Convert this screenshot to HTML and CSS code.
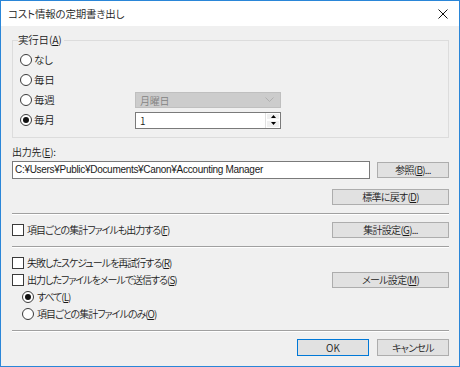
FILE: index.html
```html
<!DOCTYPE html>
<html lang="ja">
<head>
<meta charset="utf-8">
<link rel="stylesheet" href="styles.css">
</head>
<body>
<div class="window">
  <div class="titlebar">
    <span class="title">コスト情報の定期書き出し</span>
    <svg class="close" width="10" height="10" viewBox="0 0 10 10"><path d="M0.5 0.5L9.5 9.5M9.5 0.5L0.5 9.5" stroke="#111" stroke-width="1"/></svg>
  </div>
  <div class="content">
    <fieldset class="group">
      <legend>実行日(<u>A</u>)</legend>
      <div class="sched">
        <div class="opt"><span class="radio"></span>なし</div>
        <div></div>
        <div class="opt"><span class="radio"></span>毎日</div>
        <div></div>
        <div class="opt"><span class="radio"></span>毎週</div>
        <div class="combo"><span>月曜日</span><svg width="9" height="6" viewBox="0 0 9 6"><path d="M0.5 0.5L4.5 4.5L8.5 0.5" fill="none" stroke="#b0b0b0"/></svg></div>
        <div class="opt"><span class="radio on"></span>毎月</div>
        <div class="spin">
          <span class="spin-val">1</span>
          <div class="spin-btns">
            <div class="sb"><svg width="5" height="3" viewBox="0 0 5 3"><path d="M0 3L2.5 0L5 3Z" fill="#000"/></svg></div>
            <div class="sb"><svg width="5" height="3" viewBox="0 0 5 3"><path d="M0 0L2.5 3L5 0Z" fill="#000"/></svg></div>
          </div>
        </div>
      </div>
    </fieldset>

    <div class="label">出力先(<u>E</u>):</div>
    <div class="path-row">
      <div class="textbox">C:¥Users¥Public¥Documents¥Canon¥Accounting Manager</div>
      <button class="btn small">参照(<u>B</u>)...</button>
    </div>
    <div class="right-row reset">
      <button class="btn wide">標準に戻す(<u>D</u>)</button>
    </div>

    <div class="sep"></div>

    <div class="split-row summary">
      <div class="opt long"><span class="check"></span>項目ごとの集計ファイルも出力する(<u>F</u>)</div>
      <button class="btn wide">集計設定(<u>G</u>)...</button>
    </div>

    <div class="sep"></div>

    <div class="mail">
      <div class="line"><div class="opt long"><span class="check"></span>失敗したスケジュールを再試行する(<u>R</u>)</div></div>
      <div class="line split-row">
        <div class="opt long"><span class="check"></span>出力したファイルをメールで送信する(<u>S</u>)</div>
        <button class="btn wide">メール設定(<u>M</u>)</button>
      </div>
      <div class="line sub"><div class="opt long"><span class="radio on"></span>すべて(<u>L</u>)</div></div>
      <div class="line sub"><div class="opt long"><span class="radio"></span>項目ごとの集計ファイルのみ(<u>O</u>)</div></div>
    </div>

    <div class="sep last"></div>

    <div class="footer">
      <button class="btn small default">OK</button>
      <button class="btn small">キャンセル</button>
    </div>
  </div>
</div>
</body>
</html>
```

FILE: styles.css
```css
* { box-sizing: border-box; }
html, body { margin: 0; padding: 0; background: #f0f0f0; }
body {
  font-family: "Noto Sans CJK JP", "Noto Sans", sans-serif;
  font-size: 10px;
  font-weight: 350;
  letter-spacing: -0.2px;
  font-feature-settings: "palt";
  color: #1a1a1a;
}
u { text-decoration: underline; text-underline-offset: 1px; }

.window {
  width: 460px;
  height: 367px;
  border: 1px solid #2a86d8;
  background: #f0f0f0;
  display: flex;
  flex-direction: column;
}
.titlebar {
  height: 25px;
  background: #fff;
  display: flex;
  align-items: center;
  justify-content: space-between;
  padding: 0 11px 0 7px;
  flex: none;
}
.title { font-size: 10.5px; line-height: 16px; }
.close { display: block; }

.content {
  flex: 1;
  padding: 6px 10px 0 11px;
  display: flex;
  flex-direction: column;
}

.group {
  margin: 0;
  padding: 2px 0 7px 5px;
  border: 1px solid #dcdcdc;
  min-width: 0;
}
.group legend {
  padding: 0 2px 0 0;
  line-height: 16px;
  font-size: 10.5px;
}
.sched {
  display: grid;
  grid-template-columns: 117px 146px;
  grid-auto-rows: 20px;
  align-items: center;
}

.opt {
  display: flex;
  align-items: center;
  line-height: 16px;
  white-space: nowrap;
}
.sched .opt { margin-left: 2px; font-size: 10.5px; }
.opt.long { letter-spacing: -1px; }
.opt.long .radio, .opt.long .check { margin-right: 3px; }

.radio {
  width: 12px;
  height: 12px;
  border: 1px solid #3a3a3a;
  border-radius: 50%;
  background: #fff;
  margin-right: 2px;
  display: flex;
  align-items: center;
  justify-content: center;
  flex: none;
}
.radio.on::after {
  content: "";
  width: 6px;
  height: 6px;
  border-radius: 50%;
  background: #111;
}
.check {
  width: 12px;
  height: 12px;
  border: 1px solid #3a3a3a;
  background: #fff;
  margin-right: 2px;
  flex: none;
}

.combo {
  height: 16px;
  background: #cccccc;
  border: 1px solid #bfbfbf;
  color: #838383;
  display: flex;
  align-items: center;
  justify-content: space-between;
  padding: 0 6px 0 4px;
}
.spin {
  height: 17px;
  background: #fff;
  border: 1px solid #7a7a7a;
  display: flex;
  align-items: stretch;
  justify-content: space-between;
}
.spin-val { padding-left: 4px; line-height: 15px; }
.spin-btns {
  width: 15px;
  display: flex;
  flex-direction: column;
  border-left: 1px solid #e0e0e0;
}
.sb {
  flex: 1;
  display: flex;
  align-items: center;
  justify-content: center;
  background: #f0f0f0;
  border: 1px solid #fff;
}
.sb svg { display: block; }

.label { margin-top: 6px; line-height: 16px; }

.path-row {
  margin-top: 1px;
  display: flex;
  align-items: center;
  justify-content: space-between;
}
.textbox {
  width: 358px;
  height: 18px;
  border: 1px solid #7a7a7a;
  background: #fff;
  line-height: 16px;
  padding-left: 2px;
  font-family: "Liberation Sans", sans-serif;
  font-weight: 400;
  font-size: 10px;
  letter-spacing: -0.3px;
  white-space: nowrap;
}

.btn {
  font: inherit;
  letter-spacing: -0.7px;
  font-feature-settings: inherit;
  color: #1a1a1a;
  background: #e1e1e1;
  border: 1px solid #adadad;
  height: 16px;
  padding: 0;
  line-height: 14px;
  text-align: center;
}
.btn.small { width: 72px; }
.btn.wide { width: 117px; }
.btn.default { border-color: #0078d7; letter-spacing: 0; }
.footer .btn { height: 17px; }

.right-row { display: flex; justify-content: flex-end; }
.reset { margin-top: 10px; }

.sep {
  margin-top: 8px;
  height: 2px;
  border-top: 1px solid #a0a0a0;
  border-bottom: 1px solid #fff;
}
.split-row {
  display: flex;
  align-items: center;
  justify-content: space-between;
}
.summary { margin-top: 7px; height: 16px; }

.mail { margin-top: 6px; }
.line { height: 17px; display: flex; align-items: center; }
.line.sub { padding-left: 10px; }

.sep.last { margin-top: 8px; }

.footer {
  margin-top: 7px;
  display: flex;
  justify-content: flex-end;
  gap: 8px;
}
```
